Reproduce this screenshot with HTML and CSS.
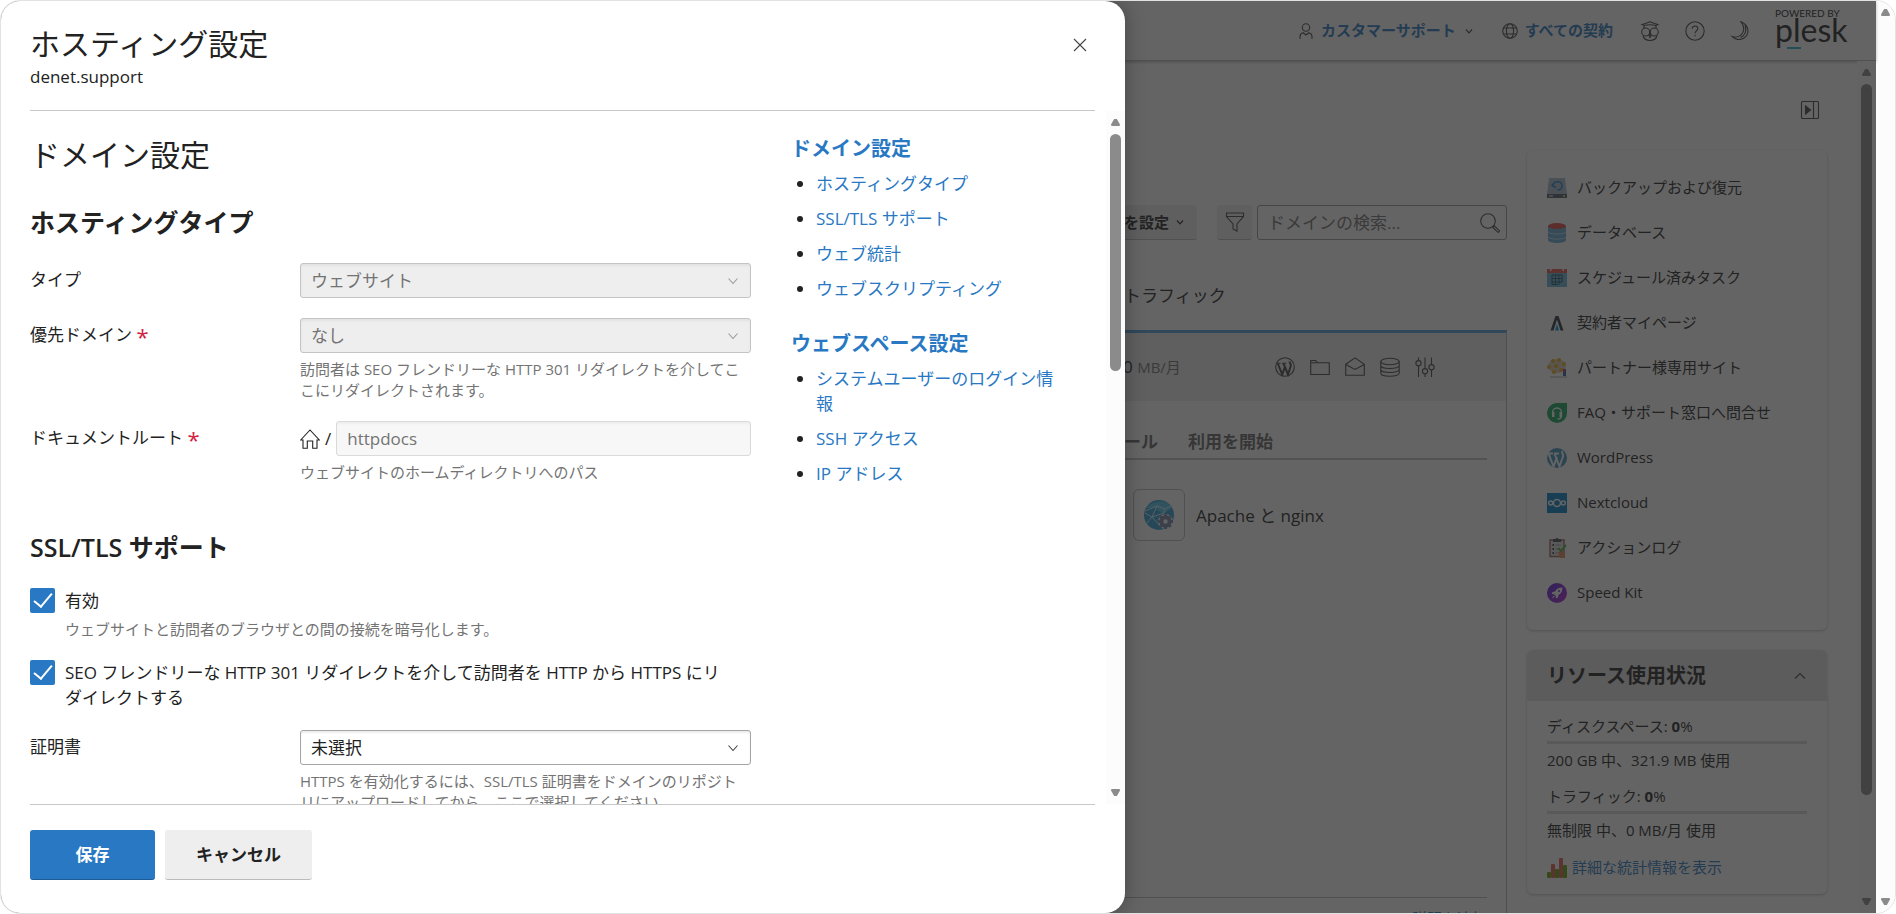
FILE: index.html
```
<!DOCTYPE html>
<html lang="ja">

<head>
  <meta charset="UTF-8">
  <meta name="viewport" content="width=device-width, initial-scale=1.0">
  <title>ホスティング設定</title>
  <link rel="stylesheet" href="styles.css">
</head>

<body>
  <div class="frame">
    <div class="app">
      <header class="topbar">
        <a class="top-link" href="#">
          <svg class="icon-16" viewBox="0 0 16 16"><circle cx="8" cy="4.500" r="3.700"/><path d="M2 16v-2.500c0-2 1-3.200 3-3.800l3 2.300 3-2.300c2 .6 3 1.800 3 3.800V16"/></svg>
          カスタマーサポート
          <svg class="icon-caret" viewBox="0 0 8 8"><path d="M2 3l2 2.300L6 3"/></svg>
        </a>
        <a class="top-link" href="#">
          <svg class="icon-16" viewBox="0 0 16 16"><circle cx="8" cy="8" r="7.300"/><ellipse cx="8" cy="8" rx="3.600" ry="7.300"/><path d="M1.500 5h13M1.500 11h13"/></svg>
          すべての契約
        </a>
        <button class="icon-button" aria-label="アドバイザー">
          <svg class="icon-20" viewBox="0 0 20 20"><path d="M2 3.500C5 2.700 8 1.500 10 .7c2 .8 5 2 8 2.800l-2 1c-4-1-8-1-12 0zM4 4.500v3M16 4.500v3M3 15c1 3 4 4.500 7 4.500s6-1.500 7-4.500"/><circle cx="5.700" cy="11" r="4"/><circle cx="14.300" cy="11" r="4"/><path d="M10 12.500 9 14.500l1 2 1-2z"/></svg>
        </button>
        <button class="icon-button" aria-label="ヘルプ">
          <svg class="icon-20" viewBox="0 0 20 20"><circle cx="10" cy="10" r="9.200"/><path d="M7.300 7.700C7.300 4 12.800 4.200 12.800 7.500c0 2.200-2.700 2.300-2.700 4.800M10.100 13.800v1.400"/></svg>
        </button>
        <button class="icon-button" aria-label="ダークモード">
          <svg class="icon-20" viewBox="0 0 20 20"><path d="M11 .8c8 3 9 12.500 3 16.200-4 2.400-9 1.800-12-1.600 4 1.300 8.500.3 10.500-3.300 2-3.800 1.300-8-1.500-11.300zM15 4c1.600 5 .3 10-4.500 12.500"/></svg>
        </button>
        <div class="brand">
          <span class="brand-powered">POWERED BY</span>
          <span class="brand-name">plesk</span>
          <span class="brand-bar"></span>
        </div>
      </header>

      <div class="workspace">
        <div class="workspace-body">
          <div class="page-tools">
            <button class="icon-button" aria-label="サイドバーを閉じる">
              <svg class="icon-20" viewBox="0 0 20 20"><rect x="1.500" y="1.500" width="17" height="17" rx="1"/><path d="M13.500 1.500v17"/><path class="solid" d="M5.500 6v8l5-4z"/></svg>
            </button>
          </div>
          <div class="columns">
            <main class="domains">
              <div class="toolbar">
                <button class="tool-button">ステータスを設定
                  <svg class="icon-caret" viewBox="0 0 8 8"><path d="M2 3l2 2.300L6 3"/></svg>
                </button>
                <div class="toolbar-search">
                  <button class="tool-button tool-filter" aria-label="フィルタ">
                    <svg class="icon-20" viewBox="0 0 20 20"><path d="M1.500 1h17v3.500L12 12v7l-4-2v-5L1.500 4.500zM1.500 4.500h17"/></svg>
                  </button>
                  <div class="search">
                    <input type="text" aria-label="ドメインの検索" placeholder="ドメインの検索...">
                    <svg class="icon-20" viewBox="0 0 20 20"><circle cx="8" cy="8" r="7.300"/><path d="m13 13.500 1-1 5.300 5.200c.5.500-1 2-1.600 1.500L12.500 14"/></svg>
                  </div>
                </div>
              </div>
              <div class="list-head"><span>トラフィック</span></div>
              <section class="domain">
                <div class="domain-row">
                  <div class="domain-traffic">0 <small>MB/月</small></div>
                  <div class="domain-icons">
                    <svg class="icon-20" viewBox="0 0 20 20"><circle cx="10" cy="10" r="9.300"/><path class="heavy" d="m2.800 6.500 4.400 11L10 9.500M8.500 6.500l4.500 11 2.700-8.300c.7-2.200-1.200-3-1.200-4.700"/><path d="M1.800 6.300h3.800M7 6.300h4.300"/></svg>
                    <svg class="icon-20" viewBox="0 0 20 20"><path d="M.7 17.500v-14h5l1.500 2.200h12.100v11.800zM.7 5.700h6.500"/></svg>
                    <svg class="icon-20" viewBox="0 0 20 20"><path d="M.7 7.200 10 .8l9.300 6.400v11.100H.7zM.7 7.500l9.300 5 9.300-5"/></svg>
                    <svg class="icon-20" viewBox="0 0 20 20"><ellipse cx="10" cy="4.500" rx="9.200" ry="3.300"/><path d="M.8 4.500v11.800c0 4 18.400 4 18.400 0V4.500M.8 8.500c0 4 18.400 4 18.400 0M.8 12.500c0 4 18.400 4 18.400 0"/></svg>
                    <svg class="icon-20" viewBox="0 0 20 20"><path d="M3.500.5v3M3.500 9v11M10 .5v11M10 17v3M16.500.5v7M16.500 13v7"/><circle cx="3.500" cy="6.200" r="2.600"/><circle cx="10" cy="14.200" r="2.600"/><circle cx="16.500" cy="10.200" r="2.600"/></svg>
                  </div>
                </div>
                <nav class="tabs">
                  <a href="#">メール</a>
                  <a href="#">利用を開始</a>
                </nav>
                <div class="tiles">
                  <a class="tile" href="#">
                    <span class="tile-icon">
                      <svg viewBox="0 0 32 32"><circle cx="16" cy="16" r="15" fill="#2f9fd8"/><path d="M3 9C9 2 23-1 29 9l-9 6-8-6z" fill="#55c4ee"/><path d="M2 12l12-5 8 3 8-4M14 7 9 18l-7-4M9 18l9 10M9 18l12-4 1-4M4 24l5-6" fill="none" stroke="#d5f1fc"/><circle cx="22.500" cy="22.500" r="7.500" fill="#fff"/><circle cx="22.500" cy="22.500" r="4.200" fill="none" stroke="#7b88a8" stroke-width="4"/><path d="M22.500 15.200v3M22.500 27v3M15.200 22.500h3M27 22.500h3M17.300 17.300l2 2M25.700 25.700l2 2M17.300 27.700l2-2M25.700 19.300l2-2" stroke="#7b88a8" stroke-width="3"/></svg>
                    </span>
                    Apache と nginx
                  </a>
                </div>
                <div class="domain-foot"><a href="#">説明を追加</a></div>
              </section>
            </main>

            <aside class="sidebar">
              <nav class="card shortcuts">
                <a href="#"><svg viewBox="0 0 20 20"><path d="M2 0h16l2 16H0z" fill="#a9bdcb"/><path d="M0 16h20v4H0z" fill="#4d5a68"/><path d="M2 17.500h4v1H2z" fill="#fff"/><path d="M16 17h2v2h-2z" fill="#b4d455"/><path d="M8 4 5 7.500l4 2M5.500 7.500C8 2 15 3 15 8c0 3-2 4-4.500 4" fill="none" stroke="#2486cc" stroke-width="1.600"/></svg>バックアップおよび復元</a>
                <a href="#"><svg viewBox="0 0 20 20"><path d="M1 3v14c0 4 18 4 18 0V3z" fill="#64a9d2"/><ellipse cx="10" cy="3" rx="9" ry="3" fill="#e5463d"/><path d="M1 8.500c0 3.500 18 3.500 18 0M1 13.500c0 3.500 18 3.500 18 0" fill="none" stroke="#b9dff3"/></svg>データベース</a>
                <a href="#"><svg viewBox="0 0 20 20"><path d="M0 4h20v15H0z" fill="#69b2d2"/><path d="M0 1h20v4H0z" fill="#e6544c"/><path d="M3 0h1.500v3H3zM15.500 0H17v3h-1.500z" fill="#fff"/><path d="M5 7h10M5 10.500h10M5 14h10M5 16.500h6M5 7v9.500M8.500 7v9.500M12 7v9.500M15 7v7" fill="none" stroke="#235574"/></svg>スケジュール済みタスク</a>
                <a href="#"><svg viewBox="0 0 20 20"><path d="M3.500 17.500 8.500 3h3L16.500 17.500h-3L10 6.500 6.500 17.500z" fill="#26343b"/><path d="M8 17.500 10 11l2 6.500z" fill="#0093dc"/></svg>契約者マイページ</a>
                <a href="#"><svg viewBox="0 0 20 20"><ellipse cx="10" cy="8" rx="9" ry="7" fill="#ddd1b7"/><g fill="#e7ad1b"><circle cx="6" cy="3" r="2"/><circle cx="12" cy="2" r="2"/><circle cx="17" cy="6" r="2"/><circle cx="2" cy="9" r="2"/><circle cx="9" cy="8" r="2"/><circle cx="7" cy="14" r="2"/><circle cx="14" cy="12" r="2"/></g><path d="M16 11h3v3h-3z" fill="#9a3b8d"/><path d="M16 14h3v4h-3z" fill="#23679e"/><path d="M3 19h17" stroke="#aaa"/></svg>パートナー様専用サイト</a>
                <a href="#"><svg viewBox="0 0 20 20"><path d="M10 0h10v10a10 10 0 1 1-10-10z" fill="#14a95b"/><path d="M5.500 11V9.500a4.500 4.500 0 0 1 9 0V13c0 2-1.500 3-4 3" fill="none" stroke="#fff" stroke-width="1.300"/><path d="M5 9h2.500v5H5zM12.500 9H15v5h-2.500z" fill="#fff"/></svg>FAQ・サポート窓口へ問合せ</a>
                <a href="#"><svg viewBox="0 0 20 20"><circle cx="10" cy="10" r="10" fill="#4196bd"/><path d="m1.500 5.500 5 13L10 9M7.500 5.500l5 13 3.500-10c.7-2-1.500-3.500-.8-5.500M1 5.500h5M7 5.500h5" fill="none" stroke="#fff" stroke-width="2"/></svg>WordPress</a>
                <a href="#"><svg viewBox="0 0 20 20"><path d="M0 0h20v20H0z" fill="#0080c8"/><g fill="none" stroke="#fff" stroke-width="1.500"><circle cx="10" cy="10" r="3.500"/><circle cx="3.700" cy="10" r="2"/><circle cx="16.300" cy="10" r="2"/></g></svg>Nextcloud</a>
                <a href="#"><svg viewBox="0 0 20 20"><path d="M3 2h14v16.500H3z" fill="#ddd" stroke="#9a6659" stroke-width="1.400"/><path d="M6 1h2.500l1-1h1l1 1H14v3H6z" fill="#424e5b"/><path d="M5.500 7h1.500M5.500 11h1.500M5.500 15h1.500" stroke="#333" stroke-width="1.800"/><path d="M8.500 7H14M8.500 11h3M8.500 15h3" stroke="#999"/><path d="m11 14 5-1 2 3v4h-5z" fill="#e5875b"/><path d="m11 10 3 3 5-6" fill="none" stroke="#4baf43" stroke-width="2"/></svg>アクションログ</a>
                <a href="#"><svg viewBox="0 0 20 20"><defs><linearGradient id="kit" x1="0" x2="1" y2="1"><stop stop-color="#5220dd"/><stop offset="1" stop-color="#b31dd0"/></linearGradient></defs><circle cx="10" cy="10" r="10" fill="url(#kit)"/><path d="M15.500 4.500c-4 0-6 1.500-7.500 4l-2.500.5-1 2 2.500.3 1.700 1.700.3 2.500 2-1 .5-2.500c2.500-1.500 4-3.500 4-7.500zM6.500 12.500 5 15.500l2.700-1.700z" fill="#fff"/><circle cx="12" cy="8" r="1" fill="#7420d8"/></svg>Speed Kit</a>
              </nav>

              <section class="card">
                <div class="card-head">
                  <h2>リソース使用状況</h2>
                  <button class="icon-button" aria-label="折りたたむ">
                    <svg class="icon-16" viewBox="0 0 16 16"><path d="m3 10.500 5-5 5 5"/></svg>
                  </button>
                </div>
                <div class="usage">
                  <p>ディスクスペース: <b>0</b>%</p>
                  <div class="usage-bar"></div>
                  <p>200 GB 中、321.9 MB 使用</p>
                  <p class="usage-next">トラフィック: <b>0</b>%</p>
                  <div class="usage-bar"></div>
                  <p>無制限 中、0 MB/月 使用</p>
                  <a class="usage-link" href="#"><svg viewBox="0 0 20 20"><g fill="#5fa800"><rect y="14" width="4" height="6" rx="1"/><rect x="8" y="11" width="4" height="9" rx="1"/><rect x="16" y="7" width="4" height="13" rx="1"/></g><g fill="#e35d51"><rect x="4" y="6" width="4" height="14" rx="1"/><rect x="12" width="4" height="20" rx="1"/></g></svg>詳細な統計情報を表示</a>
                </div>
              </section>
            </aside>
          </div>
        </div>
        <div class="scrollbar">
          <span class="arrow-up"></span>
          <span class="thumb thumb-page"></span>
          <span class="arrow-down"></span>
        </div>
      </div>

      <div class="overlay"></div>

      <div class="drawer" role="dialog" aria-labelledby="drawer-title">
        <header class="drawer-head">
          <div>
            <h1 id="drawer-title">ホスティング設定</h1>
            <p>denet.support</p>
          </div>
          <button class="icon-button" aria-label="閉じる">
            <svg class="icon-16" viewBox="0 0 16 16"><path d="m2 2 12 12M14 2 2 14"/></svg>
          </button>
        </header>

        <div class="drawer-main">
          <div class="drawer-content">
            <form class="form" id="hosting">
              <h2>ドメイン設定</h2>

              <h3>ホスティングタイプ</h3>
              <div class="field">
                <label for="type">タイプ</label>
                <div class="control">
                  <div class="select">
                    <select id="type" disabled><option>ウェブサイト</option></select>
                    <svg class="icon-16" viewBox="0 0 16 16"><path d="m3.500 5.500 4.500 5 4.500-5"/></svg>
                  </div>
                </div>
              </div>
              <div class="field">
                <label for="preferred">優先ドメイン <span class="required">*</span></label>
                <div class="control">
                  <div class="select">
                    <select id="preferred" disabled><option>なし</option></select>
                    <svg class="icon-16" viewBox="0 0 16 16"><path d="m3.500 5.500 4.500 5 4.500-5"/></svg>
                  </div>
                  <p class="hint">訪問者は SEO フレンドリーな HTTP 301 リダイレクトを介してここにリダイレクトされます。</p>
                </div>
              </div>
              <div class="field">
                <label for="root">ドキュメントルート <span class="required">*</span></label>
                <div class="control">
                  <div class="root">
                    <svg class="icon-20" viewBox="0 0 20 20"><path d="M.7 11 10 1l9.300 10H17v8.300h-4.300V12H7.300v7.300H3V11z"/></svg>
                    <span>/</span>
                    <input type="text" id="root" value="httpdocs" disabled>
                  </div>
                  <p class="hint">ウェブサイトのホームディレクトリへのパス</p>
                </div>
              </div>

              <h3 class="next-section">SSL/TLS サポート</h3>
              <div class="check">
                <input type="checkbox" id="ssl" checked>
                <div>
                  <label for="ssl">有効</label>
                  <p class="hint">ウェブサイトと訪問者のブラウザとの間の接続を暗号化します。</p>
                </div>
              </div>
              <div class="check">
                <input type="checkbox" id="seo" checked>
                <label for="seo">SEO フレンドリーな HTTP 301 リダイレクトを介して訪問者を HTTP から HTTPS にリダイレクトする</label>
              </div>
              <div class="field">
                <label for="cert">証明書</label>
                <div class="control">
                  <div class="select">
                    <select id="cert"><option>未選択</option></select>
                    <svg class="icon-16" viewBox="0 0 16 16"><path d="m3.500 5.500 4.500 5 4.500-5"/></svg>
                  </div>
                  <p class="hint">HTTPS を有効化するには、SSL/TLS 証明書をドメインのリポジトリにアップロードしてから、ここで選択してください。</p>
                </div>
              </div>
            </form>

            <nav class="toc">
              <h4><a href="#">ドメイン設定</a></h4>
              <ul>
                <li><a href="#">ホスティングタイプ</a></li>
                <li><a href="#">SSL/TLS サポート</a></li>
                <li><a href="#">ウェブ統計</a></li>
                <li><a href="#">ウェブスクリプティング</a></li>
              </ul>
              <h4><a href="#">ウェブスペース設定</a></h4>
              <ul>
                <li><a href="#">システムユーザーのログイン情報</a></li>
                <li><a href="#">SSH アクセス</a></li>
                <li><a href="#">IP アドレス</a></li>
              </ul>
            </nav>
          </div>
          <div class="scrollbar">
            <span class="arrow-up"></span>
            <span class="thumb thumb-drawer"></span>
            <span class="arrow-down"></span>
          </div>
        </div>

        <footer class="drawer-foot">
          <button class="button button-primary" type="submit" form="hosting">保存</button>
          <button class="button" type="button">キャンセル</button>
        </footer>
      </div>
    </div>
    <div class="scrollbar">
      <span class="arrow-up"></span>
      <span class="arrow-down"></span>
    </div>
  </div>
</body>

</html>
```

FILE: styles.css
```
* {
  box-sizing: border-box;
  margin: 0;
  padding: 0;
}
body {
  font-family: "Open Sans", "Noto Sans CJK JP", sans-serif;
  font-size: 17px;
  line-height: 25px;
  color: #222;
  background: #fff;
}
a {
  color: #2878c3;
  text-decoration: none;
}
button, input, select {
  font: inherit;
  color: inherit;
}
svg {
  flex: none;
  display: block;
}
.frame {
  display: flex;
  height: 100vh;
  overflow: hidden;
  border: 1px solid #e2e2e2;
  border-radius: 20px;
}
.app {
  position: relative;
  flex: 1;
  min-width: 0;
  display: flex;
  flex-direction: column;
}

/* icons */
.icon-16, .icon-20, .icon-caret {
  fill: none;
  stroke: currentColor;
  stroke-width: 1.1;
}
.icon-16 {
  width: 16px;
  height: 16px;
}
.icon-20 {
  width: 20px;
  height: 20px;
}
.icon-caret {
  width: 12px;
  height: 12px;
  stroke-width: 0.8;
}
.solid {
  fill: currentColor;
}
.heavy {
  stroke-width: 2;
}
.icon-button {
  display: flex;
  border: 0;
  background: none;
  color: #444;
}

/* scrollbars */
.scrollbar {
  flex: none;
  width: 19px;
  background: #fcfcfc;
  display: flex;
  flex-direction: column;
  align-items: center;
  padding: 8px 0;
}
.arrow-up, .arrow-down {
  width: 9px;
  height: 7px;
  background: #8b8b8b;
}
.arrow-up {
  clip-path: polygon(35% 0, 65% 0, 100% 80%, 95% 100%, 5% 100%, 0 80%);
}
.arrow-down {
  margin-top: auto;
  clip-path: polygon(35% 100%, 65% 100%, 100% 20%, 95% 0, 5% 0, 0 20%);
}
.thumb {
  width: 11px;
  margin-top: 8px;
  border-radius: 6px;
  background: #8b8b8b;
}
.thumb-page {
  height: 85%;
}
.thumb-drawer {
  height: 35%;
}

/* page under the drawer */
.topbar {
  height: 60px;
  flex: none;
  display: flex;
  align-items: center;
  justify-content: flex-end;
  gap: 25px;
  padding-right: 30px;
  border-bottom: 1px solid #bbb;
  box-shadow: 0 1px 3px rgba(0, 0, 0, .3);
}
.top-link {
  display: flex;
  align-items: center;
  gap: 7px;
  margin-right: 2px;
  font-size: 15px;
  font-weight: 600;
}
.top-link svg {
  color: #444;
}
.brand {
  align-self: flex-start;
  display: flex;
  flex-direction: column;
  width: 71px;
  padding-top: 7px;
  font-family: Lato, sans-serif;
  color: #222;
}
.brand-powered {
  font-size: 10px;
  line-height: 10px;
  white-space: nowrap;
}
.brand-name {
  font-size: 32px;
  line-height: 24px;
}
.brand-bar {
  width: 14px;
  height: 2px;
  margin: 5px 0 0 12px;
  background: #20b4d2;
}
.workspace {
  flex: 1;
  min-height: 0;
  display: flex;
}
.workspace-body {
  flex: 1;
  min-width: 0;
  display: flex;
  flex-direction: column;
  padding: 39px 30px 0;
}
.page-tools {
  display: flex;
  justify-content: flex-end;
  padding-right: 7px;
}
.columns {
  flex: 1;
  min-height: 0;
  display: flex;
  gap: 20px;
  padding-top: 30px;
}
.domains {
  flex: 1;
  min-width: 0;
  display: flex;
  flex-direction: column;
  padding-top: 55px;
}
.toolbar {
  display: flex;
  justify-content: flex-end;
  gap: 20px;
}
.toolbar-search {
  display: flex;
  gap: 5px;
}
.tool-button {
  display: flex;
  align-items: center;
  gap: 5px;
  height: 35px;
  padding: 0 11px;
  border: 0;
  border-bottom: 1px solid #bbb;
  border-radius: 3px;
  background: #eee;
  font-size: 15px;
  font-weight: 600;
}
.tool-filter {
  width: 35px;
  padding: 0 8px;
  color: #444;
}
.search {
  display: flex;
  align-items: center;
  width: 250px;
  height: 35px;
  padding: 0 6px 0 10px;
  border: 1px solid #999;
  border-radius: 3px;
  color: #444;
}
.search input {
  flex: 1;
  min-width: 0;
  border: 0;
  background: none;
}
.search input::placeholder {
  color: #737373;
}
.list-head {
  display: flex;
  justify-content: flex-end;
  padding: 43px 0 22px;
}
.list-head span {
  width: 383px;
}
.domain {
  flex: 1;
  min-height: 0;
  display: flex;
  flex-direction: column;
  border-top: 3px solid #50a0dc;
  border-right: 1px solid #b8b8b8;
}
.domain-row {
  flex: none;
  display: flex;
  justify-content: flex-end;
  align-items: center;
  height: 68px;
  background: #eee;
}
.domain-traffic {
  width: 152px;
}
.domain-traffic small {
  font-size: 15px;
  color: #737373;
}
.domain-icons {
  display: flex;
  gap: 15px;
  width: 231px;
  color: #444;
}
.tabs {
  display: flex;
  justify-content: flex-end;
  gap: 30px;
  margin-right: 19px;
  padding: 28px 214px 4px 0;
  border-bottom: 2px solid #c4c4c4;
}
.tabs a {
  font-weight: 600;
  color: #666;
}
.tiles {
  flex: 1;
  display: flex;
  justify-content: flex-end;
  align-items: flex-start;
  padding: 29px 19px 0 0;
}
.tile {
  display: flex;
  align-items: center;
  gap: 11px;
  width: 354px;
  color: #222;
}
.tile-icon {
  padding: 9px;
  border: 1px solid #bbb;
  border-radius: 6px;
}
.tile-icon svg {
  width: 32px;
  height: 32px;
}
.domain-foot {
  flex: none;
  height: 16px;
  overflow: hidden;
  margin-right: 19px;
  padding-top: 10px;
  border-top: 1px solid #bbb;
  font-size: 15px;
  line-height: 21px;
  text-align: right;
}
.sidebar {
  flex: none;
  width: 300px;
  display: flex;
  flex-direction: column;
  gap: 20px;
  font-size: 15px;
}
.card {
  border-radius: 6px;
  overflow: hidden;
  box-shadow: 0 1px 3px rgba(0, 0, 0, .25);
}
.shortcuts {
  padding: 15px 20px;
}
.shortcuts a {
  display: flex;
  align-items: center;
  gap: 10px;
  height: 45px;
  color: #222;
}
.shortcuts svg, .usage-link svg {
  width: 20px;
  height: 20px;
}
.card-head {
  display: flex;
  align-items: center;
  justify-content: space-between;
  height: 51px;
  padding: 0 19px 0 20px;
  background: #e4e4e4;
}
.card-head h2 {
  font-size: 20px;
  font-weight: 600;
}
.usage {
  padding: 13px 20px 14px;
}
.usage-bar {
  height: 3px;
  margin: 2px 0 4px;
  background: #dadada;
}
.usage-next {
  padding-top: 11px;
}
.usage-link {
  display: flex;
  align-items: center;
  gap: 5px;
  margin-top: 12px;
}
.overlay {
  position: absolute;
  inset: 0;
  background: rgba(34, 34, 34, .7);
}

/* drawer */
.drawer {
  position: absolute;
  top: 0;
  bottom: 0;
  left: 0;
  width: calc(60% - 1px);
  display: flex;
  flex-direction: column;
  overflow: hidden;
  background: #fff;
  border-radius: 0 20px 20px 0;
  box-shadow: 0 0 20px rgba(0, 0, 0, .3);
}
.drawer-head {
  display: flex;
  justify-content: space-between;
  align-items: flex-start;
  margin: 0 30px 0 29px;
  padding: 25px 7px 21px 0;
  border-bottom: 1px solid #c8c8c8;
}
.drawer-head h1 {
  font-size: 30px;
  line-height: 36px;
  font-weight: 400;
}
.drawer-head p {
  padding-top: 3px;
  line-height: 24px;
}
.drawer-head .icon-button {
  padding-top: 11px;
}
.drawer-main {
  flex: 1;
  min-height: 0;
  display: flex;
}
.drawer-content {
  flex: 1;
  min-width: 0;
  display: flex;
  gap: 40px;
  overflow: hidden;
  padding: 0 11px 0 29px;
}
.form {
  flex: 1;
  min-width: 0;
}
.form h2 {
  padding-top: 25px;
  font-size: 30px;
  line-height: 38px;
  font-weight: 400;
}
.form h3 {
  margin: 32px 0 25px;
  font-size: 25px;
  line-height: 32px;
  font-weight: 600;
}
.form .next-section {
  margin-top: 48px;
}
.field {
  display: flex;
  margin-bottom: 20px;
}
.field > label {
  width: 270px;
  padding-top: 4px;
}
.required {
  font-size: 22px;
  line-height: 20px;
  vertical-align: -4px;
  color: #d0223f;
}
.control {
  flex: 1;
  min-width: 0;
}
.select {
  display: grid;
  align-items: center;
}
.select select, .select svg {
  grid-area: 1 / 1;
}
.select svg {
  justify-self: end;
  margin-right: 10px;
  color: #444;
  pointer-events: none;
}
.select select {
  appearance: none;
  height: 35px;
  padding: 0 10px;
  border: 1px solid #a4a4a4;
  border-radius: 3px;
  background: #fff;
  box-shadow: inset 0 2px 2px #eee;
}
.select select:disabled {
  border-color: #c4c4c4;
  background: #eee;
  color: #737373;
  opacity: 1;
  box-shadow: inset 0 2px 2px #e2e2e2;
}
.select select:disabled + svg {
  color: #999;
}
.root {
  display: flex;
  align-items: center;
  gap: 5px;
}
.root input {
  flex: 1;
  min-width: 0;
  height: 35px;
  padding: 0 10px;
  border: 1px solid #dadada;
  border-radius: 3px;
  background: #f7f7f7;
  box-shadow: inset 0 2px 2px #eee;
  color: #737373;
}
.hint {
  padding-top: 6px;
  font-size: 15px;
  line-height: 21px;
  color: #737373;
}
.check {
  display: flex;
  gap: 10px;
  margin-bottom: 20px;
  padding-right: 20px;
}
.check input {
  appearance: none;
  flex: none;
  width: 25px;
  height: 25px;
  border-radius: 2px;
  background: #2878c3;
}
.check input::after {
  content: "";
  display: block;
  width: 8px;
  height: 16px;
  margin: 1px 0 0 8px;
  border: solid #fff;
  border-width: 0 2px 2px 0;
  transform: rotate(40deg);
}
.toc {
  flex: none;
  width: 304px;
  padding: 25px 30px 0 0;
}
.toc h4 {
  margin-bottom: 10px;
  font-size: 20px;
  font-weight: 600;
}
.toc ul {
  margin-bottom: 30px;
  padding-left: 25px;
}
.toc li {
  margin-bottom: 10px;
}
.drawer-foot {
  display: flex;
  gap: 10px;
  margin: 0 30px 0 29px;
  padding: 25px 0 33px;
  border-top: 1px solid #c8c8c8;
}
.button {
  height: 50px;
  padding: 0 31px;
  border: 0;
  border-bottom: 1px solid #bbb;
  border-radius: 3px;
  background: #eee;
  font-weight: 600;
}
.button-primary {
  min-width: 125px;
  border-color: #1d5c97;
  background: #2878c3;
  color: #fff;
}
```
